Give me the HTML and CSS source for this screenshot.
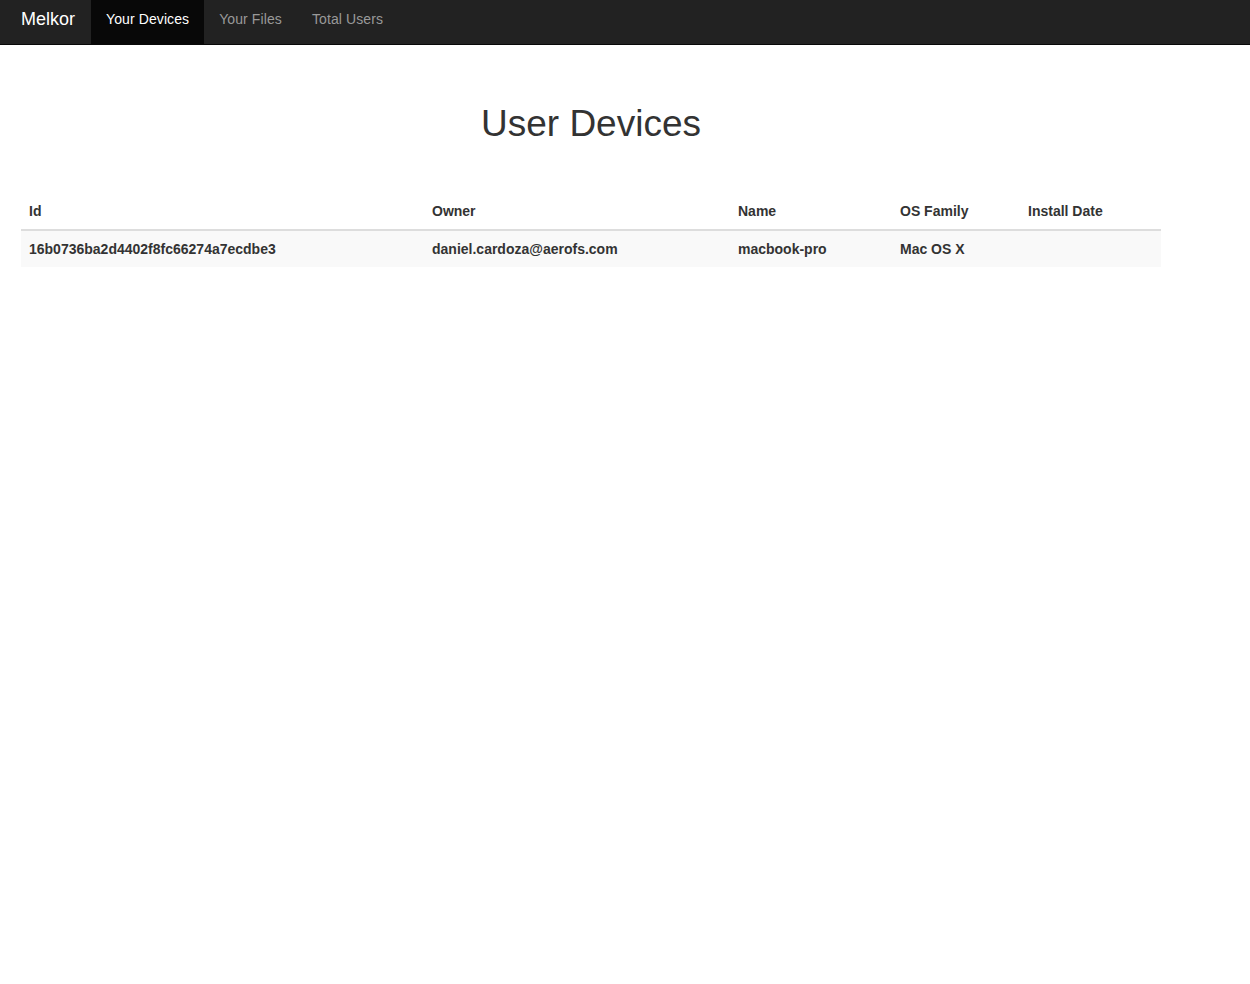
FILE: index.html
```html
<!DOCTYPE html>
<html lang="en">
<head>
<meta charset="utf-8">
<title>Melkor - User Devices</title>
<link rel="stylesheet" href="styles.css">
</head>
<body>
<nav class="navbar">
  <a class="brand" href="#">Melkor</a>
  <ul class="nav">
    <li class="active"><a href="#">Your Devices</a></li>
    <li><a href="#">Your Files</a></li>
    <li><a href="#">Total Users</a></li>
  </ul>
</nav>
<main class="container">
  <h1 class="title">User Devices</h1>
  <table class="devices">
    <colgroup>
      <col class="c-id"><col class="c-owner"><col class="c-name"><col class="c-os"><col class="c-date">
    </colgroup>
    <thead>
      <tr><th>Id</th><th>Owner</th><th>Name</th><th>OS Family</th><th>Install Date</th></tr>
    </thead>
    <tbody>
      <tr><td>16b0736ba2d4402f8fc66274a7ecdbe3</td><td>daniel.cardoza@aerofs.com</td><td>macbook-pro</td><td>Mac OS X</td><td></td></tr>
    </tbody>
  </table>
</main>
</body>
</html>
```
FILE: styles.css
```css
html, body {
  margin: 0;
  padding: 0;
  background: #fff;
  font-family: "Liberation Sans", Arial, Helvetica, sans-serif;
  font-size: 14px;
  line-height: 20px;
  color: #333;
}

.navbar {
  display: flex;
  align-items: stretch;
  height: 44px;
  background: #222;
  border-bottom: 1px solid #080808;
  padding-left: 21px;
}

.brand {
  display: flex;
  align-items: center;
  padding-right: 16px;
  font-size: 18px;
  color: #fff;
  text-decoration: none;
  height: 38px;
}

.nav {
  display: flex;
  margin: 0;
  padding: 0;
  list-style: none;
}

.nav li a {
  display: block;
  padding: 9px 15px 15px;
  line-height: 20px;
  letter-spacing: 0.1px;
  color: #999;
  text-decoration: none;
}

.nav li.active a {
  background: #080808;
  color: #fff;
}

.container {
  width: 1140px;
  margin-left: 21px;
}

.title {
  margin: 59px 0 49px;
  font-size: 37px;
  line-height: 40px;
  font-weight: normal;
  text-align: center;
  color: #333;
}

.devices {
  width: 1140px;
  border-collapse: collapse;
  border-spacing: 0;
  table-layout: fixed;
}

.c-id { width: 403px; }
.c-owner { width: 306px; }
.c-name { width: 162px; }
.c-os { width: 128px; }
.c-date { width: 141px; }

.devices th,
.devices td {
  padding: 8px;
  line-height: 20px;
  text-align: left;
  font-weight: bold;
  vertical-align: top;
}

.devices th {
  border-bottom: 2px solid #ddd;
}

.devices tbody tr {
  background: #f9f9f9;
}
```
